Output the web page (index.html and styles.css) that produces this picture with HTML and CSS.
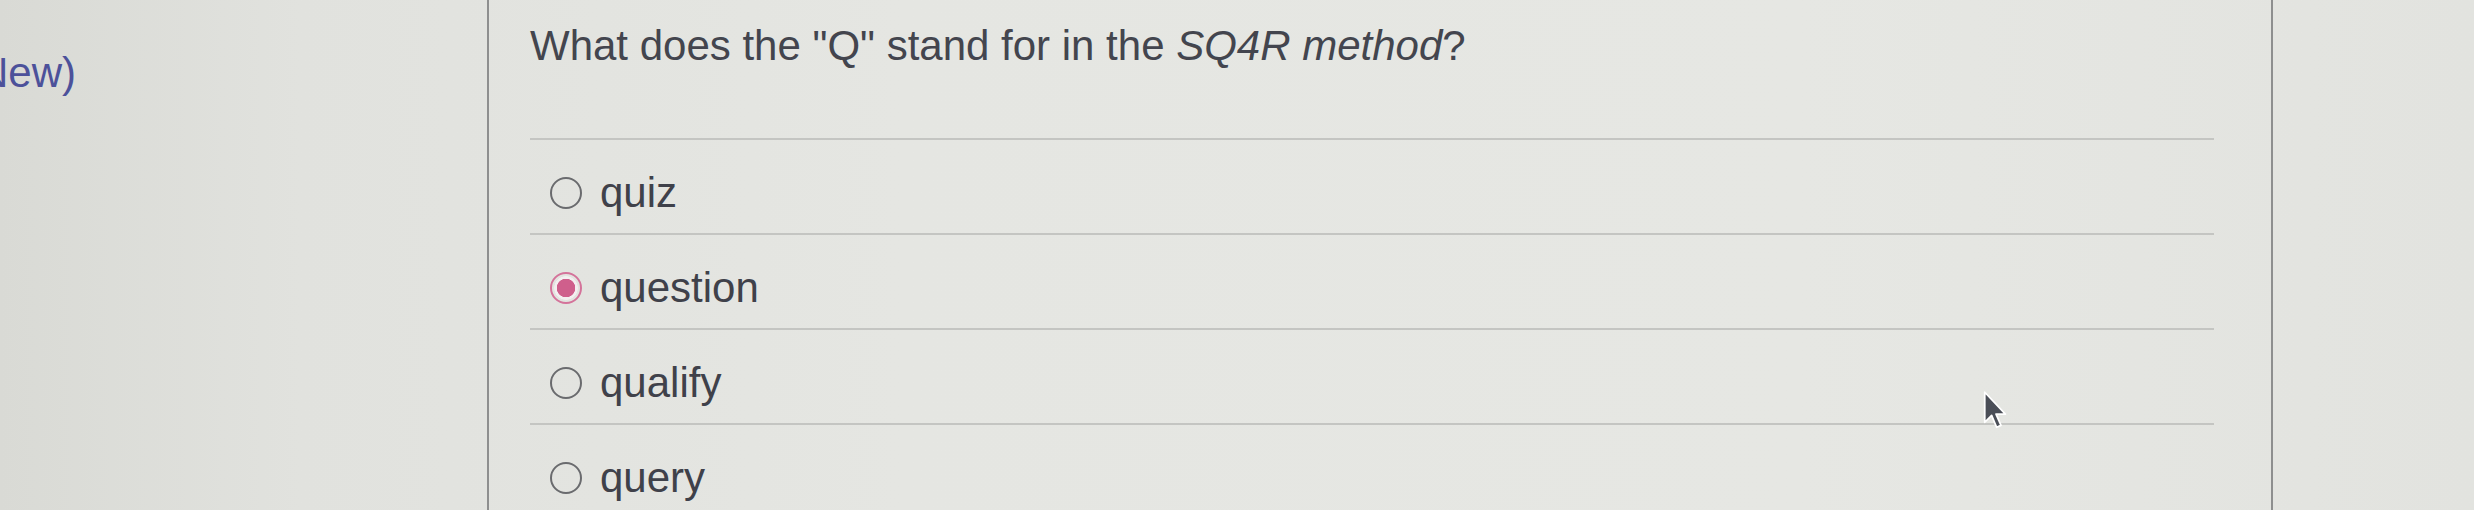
FILE: index.html
```html
<!DOCTYPE html>
<html lang="en">
<head>
<meta charset="utf-8">
<title>SQ4R question</title>
<link rel="stylesheet" href="styles.css">
</head>
<body>
<div class="page">
  <aside class="side">
    <span class="side-label">(New)</span>
  </aside>
  <main class="main">
    <h2 class="question">What does the "Q" stand for in the <em>SQ4R method</em>?</h2>
    <ul class="options">
      <li class="option"><span class="radio"></span><span class="label">quiz</span></li>
      <li class="option"><span class="radio checked"></span><span class="label">question</span></li>
      <li class="option"><span class="radio"></span><span class="label">qualify</span></li>
      <li class="option"><span class="radio"></span><span class="label">query</span></li>
    </ul>
    <svg class="cursor" width="26" height="40" viewBox="0 0 20 32" aria-hidden="true">
      <path d="M1 1 L1 25 L6.5 19.5 L10.5 29 L14 27.5 L10 18.5 L17.5 18.5 Z" fill="#4a4e57" stroke="#ffffff" stroke-width="1.4" stroke-linejoin="round"/>
    </svg>
  </main>
  <aside class="rest"></aside>
</div>
</body>
</html>
```

FILE: styles.css
```css
html, body {
  margin: 0;
  padding: 0;
}
body {
  width: 2474px;
  height: 510px;
  overflow: hidden;
  background: linear-gradient(90deg, #d9dad5 0px, #e1e2de 300px, #e5e6e2 900px, #e6e7e3 1800px, #e2e3df 2474px);
  font-family: "Liberation Sans", Arial, sans-serif;
}
.page {
  display: flex;
  height: 510px;
}
.side {
  width: 487px;
  flex: none;
  border-right: 2px solid #8e8f8f;
  padding-top: 48px;
  overflow: hidden;
}
.side-label {
  display: block;
  margin-left: -36px;
  font-size: 42px;
  line-height: 50px;
  color: #4c519a;
  white-space: nowrap;
}
.main {
  position: relative;
  flex: none;
  width: 1784px;
  box-sizing: border-box;
  border-right: 2px solid #8e8f8f;
  padding: 21px 57px 0 41px;
}
.question {
  margin: 0 0 67px;
  font-size: 42px;
  line-height: 50px;
  font-weight: normal;
  color: #43454e;
  white-space: nowrap;
}
.question em {
  font-style: italic;
}
.options {
  list-style: none;
  margin: 0;
  padding: 0;
  border-top: 2px solid #c4c5c2;
}
.option {
  display: flex;
  align-items: center;
  gap: 18px;
  height: 95px;
  box-sizing: border-box;
  padding: 12px 0 0 20px;
  border-bottom: 2px solid #c4c5c2;
}
.radio {
  width: 32px;
  height: 32px;
  flex: none;
  box-sizing: border-box;
  border: 2.5px solid #6a6b6e;
  border-radius: 50%;
}
.radio.checked {
  border: 2.5px solid #d4739a;
  background: radial-gradient(circle, #cf5f8c 0 9px, #f4eef0 9.5px 11.5px, transparent 12px);
}
.label {
  font-size: 42px;
  line-height: 50px;
  color: #3f414a;
}
.cursor {
  position: absolute;
  left: 1494px;
  top: 391px;
}
.rest {
  flex: 1;
}
```
